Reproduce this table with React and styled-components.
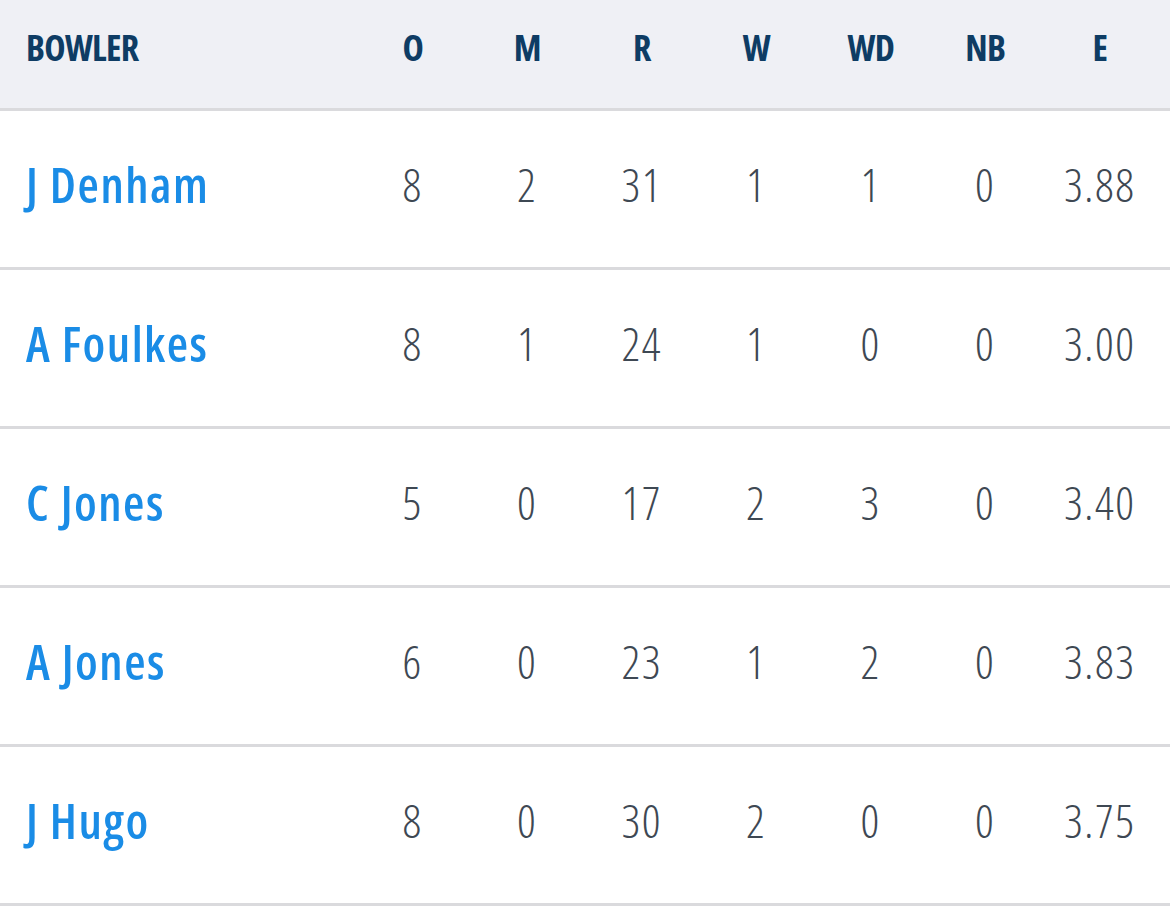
import React from "react"
import styled, { createGlobalStyle } from "styled-components"

const GlobalStyle = createGlobalStyle`
	html, body {
		margin: 0;
		padding: 0;
		background: #fff;
	}
	body {
		font-family: "Open Sans", "DejaVu Sans Condensed", "Liberation Sans Narrow", sans-serif;
		font-stretch: 75%;
	}
`

const Table = styled.div`
	width: 1170px;
	background: #fff;
`

const Row = styled.div`
	display: grid;
	grid-template-columns: 1fr repeat(7, 114.5px);
	align-items: center;
	padding: 0 13px 0 26px;
	height: ${(p) => (p.$head ? "108px" : "156px")};
	background: ${(p) => (p.$head ? "#eff0f5" : "#fff")};
	border-bottom: 3px solid #dadadd;
`

const HeadCell = styled.div`
	font-size: 36px;
	font-weight: 700;
	color: #0e3c64;
	letter-spacing: -0.7px;
	text-align: ${(p) => (p.$left ? "left" : "center")};
	margin-top: -14px;
`

const Name = styled.div`
	font-size: 49px;
	font-weight: 600;
	letter-spacing: 1.5px;
	color: #1a8ce6;
	margin-top: -10px;
`

const Stat = styled.div`
	font-size: 46px;
	font-weight: 300;
	letter-spacing: 1.6px;
	color: #3e4853;
	text-align: center;
	margin-top: -10px;
`

const columns = ["O", "M", "R", "W", "WD", "NB", "E"]

const bowlers = [
	{ name: "J Denham", stats: ["8", "2", "31", "1", "1", "0", "3.88"] },
	{ name: "A Foulkes", stats: ["8", "1", "24", "1", "0", "0", "3.00"] },
	{ name: "C Jones", stats: ["5", "0", "17", "2", "3", "0", "3.40"] },
	{ name: "A Jones", stats: ["6", "0", "23", "1", "2", "0", "3.83"] },
	{ name: "J Hugo", stats: ["8", "0", "30", "2", "0", "0", "3.75"] },
]

function App() {
	return (
		<>
			<GlobalStyle />
			<Table>
				<Row $head>
					<HeadCell $left>BOWLER</HeadCell>
					{columns.map((c) => (
						<HeadCell key={c}>{c}</HeadCell>
					))}
				</Row>
				{bowlers.map((b) => (
					<Row key={b.name}>
						<Name>{b.name}</Name>
						{b.stats.map((s, i) => (
							<Stat key={i}>{s}</Stat>
						))}
					</Row>
				))}
			</Table>
		</>
	)
}

export default App
